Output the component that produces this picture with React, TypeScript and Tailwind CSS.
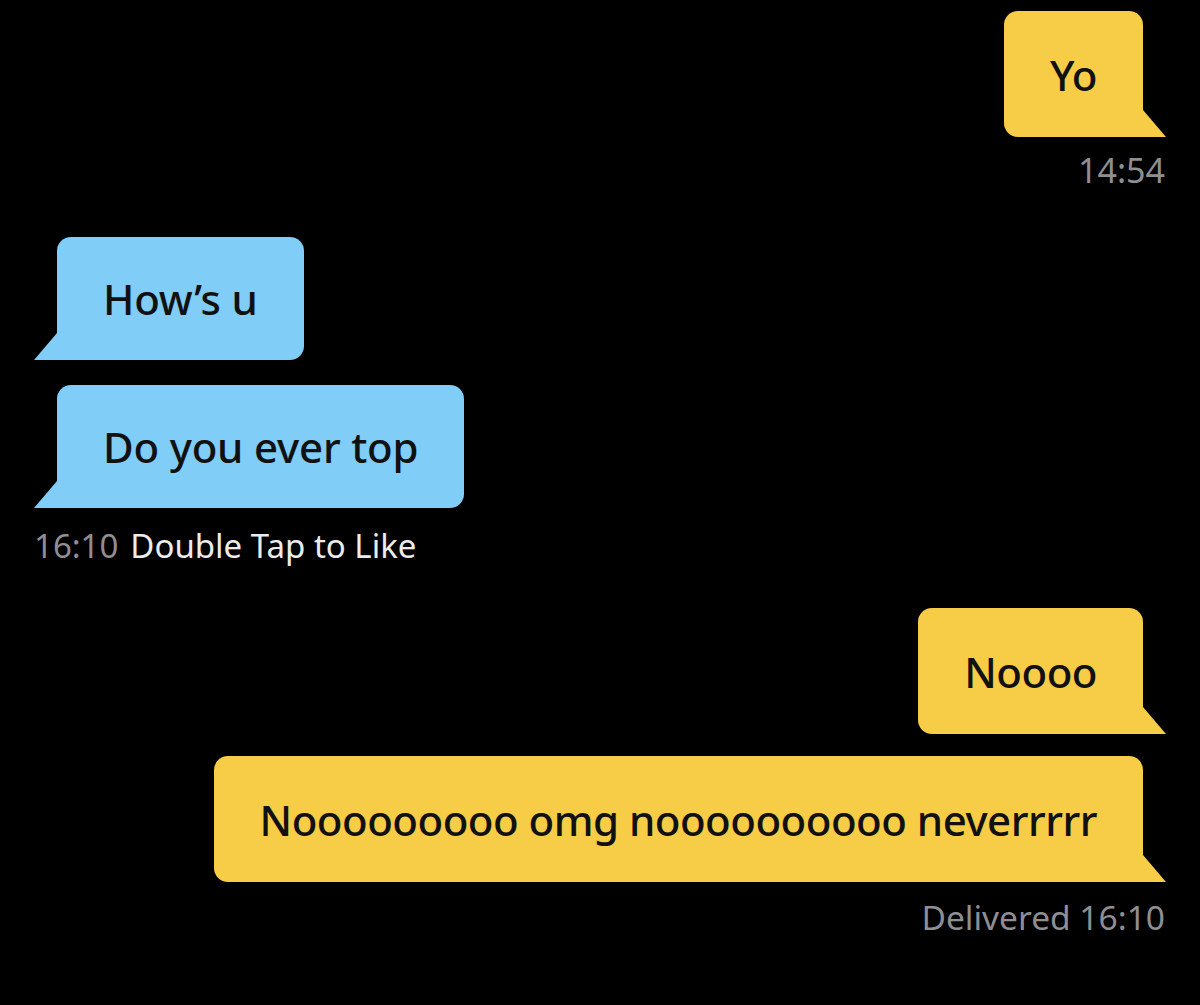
import React from 'react';

// ─── Bubble ─────────────────────────────────────────────────────────────
interface IBubbleProps {
    text: string;
    mine?: boolean;
}

const Tail: React.FC<{ mine?: boolean; color: string }> = ({ mine, color }) => (
    <svg width="23" height="27" viewBox="0 0 23 27" className="shrink-0 block">
        <polygon points={mine ? '0,0 23,27 0,27' : '23,0 0,27 23,27'} fill={color} />
    </svg>
);

const Bubble: React.FC<IBubbleProps> = ({ text, mine }) => {
    const color = mine ? '#f7cc47' : '#80cdf7';
    return (
        <div className={mine ? 'flex justify-end items-end' : 'flex justify-start items-end'}>
            {!mine && <Tail color={color} />}
            <div
                className={
                    mine
                        ? 'h-[126px] flex items-center px-[46px] rounded-[14px] rounded-br-none bg-[#f7cc47] text-[#111111] text-[42px] tracking-[-0.5px] font-medium'
                        : 'h-[123px] flex items-center px-[46px] rounded-[14px] rounded-bl-none bg-[#80cdf7] text-[#111111] text-[42px] tracking-[-0.2px] font-medium'
                }
            >
                {text}
            </div>
            {mine && <Tail mine color={color} />}
        </div>
    );
};

export default function App() {
    return (
        <div
            className="w-[1200px] h-[1005px] bg-black px-[34px] pt-[11px] flex flex-col"
            style={{ fontFamily: '"Noto Sans", "Open Sans", sans-serif' }}
        >
            <Bubble text="Yo" mine />
            <div className="text-right text-[34px] leading-[40px] text-[#8e8e93] mt-[13px] pr-[1px]">14:54</div>

            <div className="mt-[47px]">
                <Bubble text="How’s u" />
            </div>
            <div className="mt-[25px]">
                <Bubble text="Do you ever top" />
            </div>
            <div className="text-[33px] leading-[40px] mt-[18px] flex gap-[12px]">
                <span className="text-[#8e8e93]">16:10</span>
                <span className="text-[#ececec]">Double Tap to Like</span>
            </div>

            <div className="mt-[42px]">
                <Bubble text="Noooo" mine />
            </div>
            <div className="mt-[22px]">
                <Bubble text="Nooooooooo omg noooooooooo neverrrrr" mine />
            </div>
            <div className="text-right text-[33.5px] leading-[40px] text-[#8e8e93] mt-[15px] pr-[1px]">Delivered 16:10</div>
        </div>
    );
}
